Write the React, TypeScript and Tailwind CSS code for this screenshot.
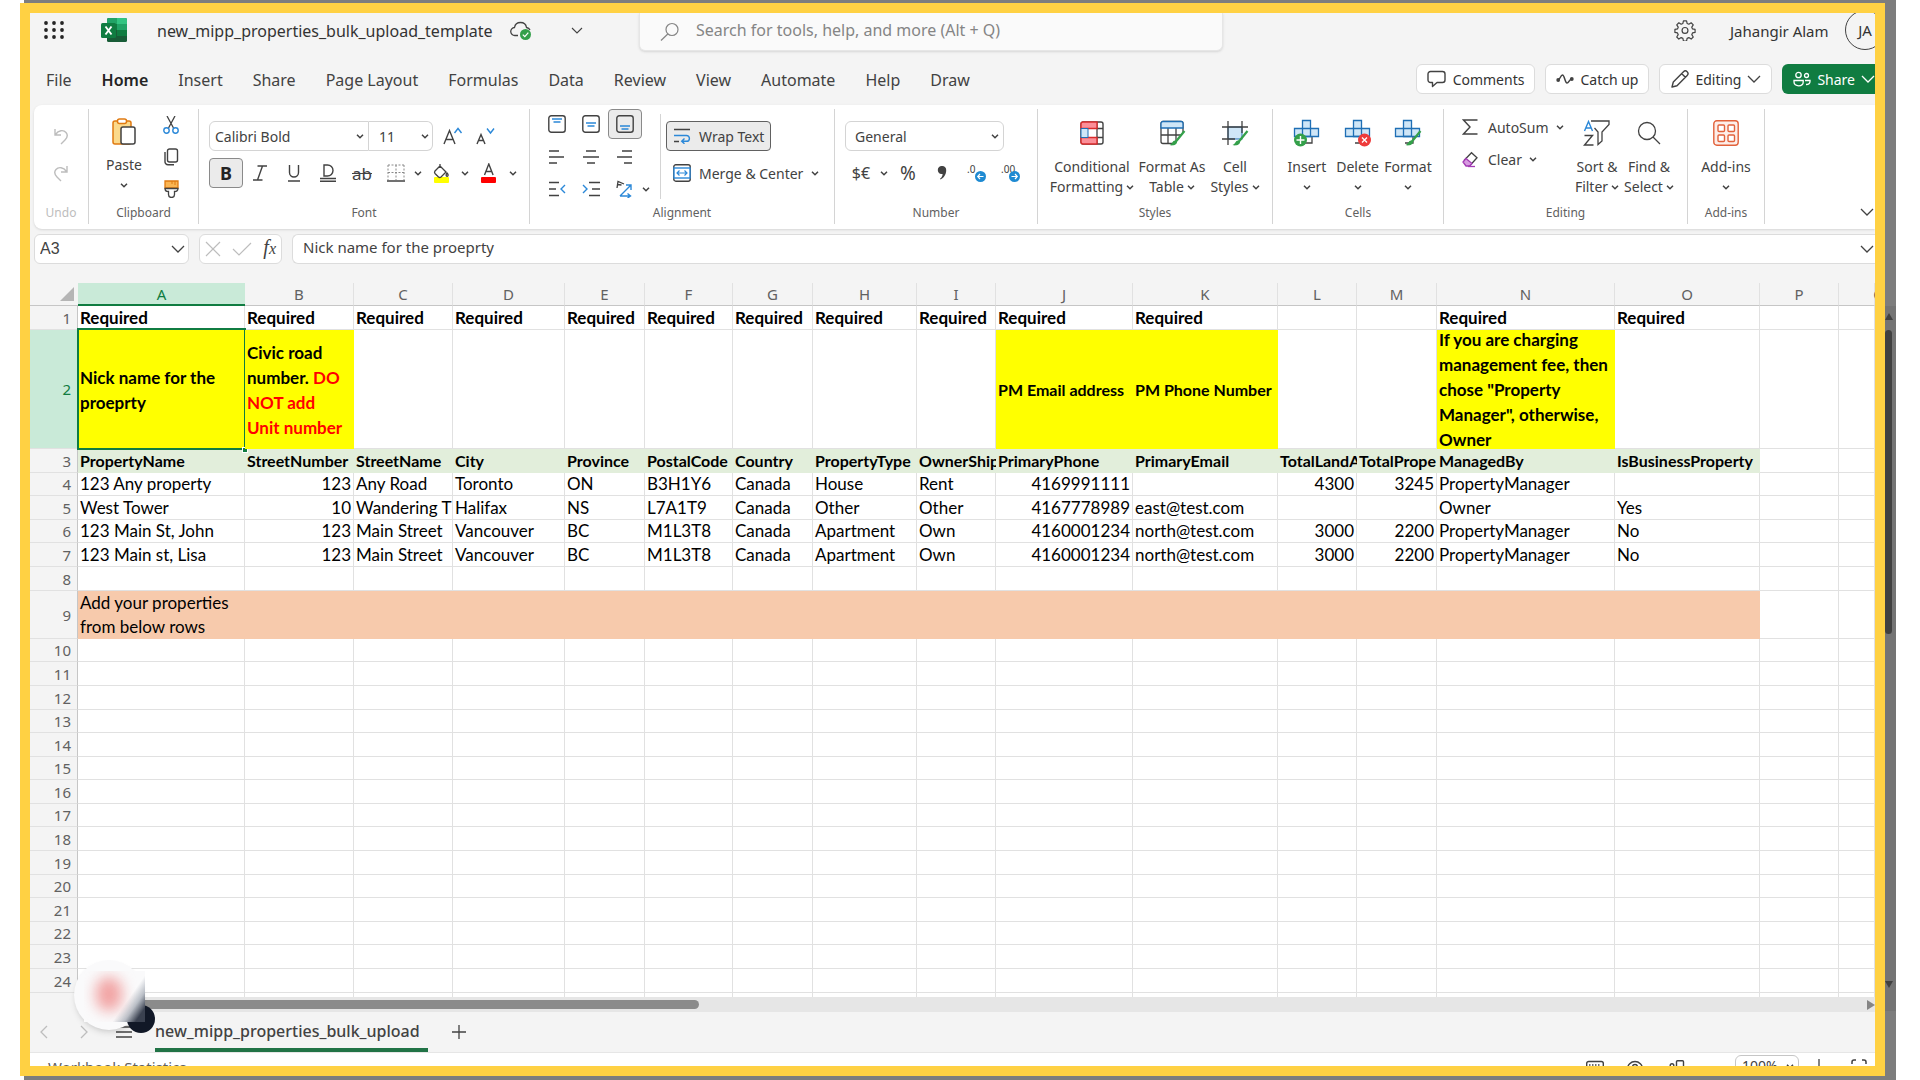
import React from "react";

type Kids = { children?: React.ReactNode };

const INK = "#424242";
const BLUE = "#2b88d8";

function Svg({ w, h, vb, children, sw = 1 }: Kids & { w: number; h: number; vb?: string; sw?: number }) {
  return (
    <svg width={w} height={h} viewBox={vb ?? `0 0 ${w} ${h}`} fill="none" stroke={INK} strokeWidth={sw} className="shrink-0" aria-hidden="true">
      {children}
    </svg>
  );
}

function Chev({ big = false, color = INK }: { big?: boolean; color?: string }) {
  return big ? (
    <svg width="14" height="8" viewBox="0 0 14 8" fill="none" stroke={color} strokeWidth="1.3" className="shrink-0" aria-hidden="true">
      <path d="M1 1l6 6 6-6" />
    </svg>
  ) : (
    <svg width="8" height="5" viewBox="0 0 8 5" fill="none" stroke={color} strokeWidth="1.5" className="shrink-0" aria-hidden="true">
      <path d="M1 .8l3 3 3-3" />
    </svg>
  );
}

/* ---------- title bar ---------- */

function TitleBar() {
  return (
    <header className="flex h-[38px] shrink-0 items-start">
      <button aria-label="App launcher" className="ml-[14px] mt-2 shrink-0">
        <Svg w={20} h={18}>
          {[2, 9, 16].map((y) => [2, 10, 18].map((x) => <circle key={`${x}-${y}`} cx={x} cy={y} r="1.9" fill="#242424" stroke="none" />))}
        </Svg>
      </button>
      <div className="ml-[37px] mt-[5px] shrink-0">
        <Svg w={26} h={24}>
          <g stroke="none">
            <rect x="6" y="0" width="20" height="24" rx="1.5" fill="#185c37" />
            <path d="M7.500 0H16v6H6V1.500A1.500 1.500 0 0 1 7.500 0z" fill="#21a366" />
            <path d="M16 0h8.500A1.500 1.500 0 0 1 26 1.500V6H16z" fill="#33c481" />
            <rect x="6" y="6" width="10" height="6" fill="#107c41" />
            <rect x="16" y="6" width="10" height="6" fill="#21a366" />
            <rect x="16" y="12" width="10" height="6" fill="#107c41" />
            <rect x="0" y="5" width="15" height="15" rx="1.500" fill="#107c41" />
          </g>
          <path d="M4.500 8.500l6 8M10.500 8.500l-6 8" stroke="#fff" strokeWidth="1.9" />
        </Svg>
      </div>
      <span className="ml-[30px] mt-[6px] w-[341px] shrink-0 whitespace-nowrap text-base leading-6">new_mipp_properties_bulk_upload_template</span>
      <span className="ml-[12px] mt-[8px] shrink-0">
        <Svg w={22} h={20}>
          <path d="M8 14.500H5a4 4 0 0 1-.5-8C5 3.500 7.500 1.500 10.500 1.500s5.500 2 6 5c1.800.2 3 1.300 3.500 2.500" strokeWidth="1.3" />
          <circle cx="15.500" cy="13.500" r="5.500" fill="#34a04a" stroke="none" />
          <path d="M12.800 13.700l2 2 3.500-4" stroke="#fff" strokeWidth="1.2" />
        </Svg>
      </span>
      <button aria-label="File menu" className="ml-[39px] mt-[14px] shrink-0">
        <Svg w={12} h={7}><path d="M1 1l5 5 5-5" strokeWidth="1.1" /></Svg>
      </button>
      <label className="ml-[56px] flex h-[38px] w-[584px] shrink-0 items-center gap-4 rounded-b-md border border-t-0 border-[#e6e6e6] bg-[#fafafa] px-5 shadow-sm">
        <Svg w={20} h={20}>
          <circle cx="12" cy="7.500" r="6" stroke="#858585" strokeWidth="1.2" />
          <path d="M7.800 12L1 18.500" stroke="#858585" strokeWidth="1.2" />
        </Svg>
        <input aria-label="Search" placeholder="Search for tools, help, and more (Alt + Q)" className="mb-1 w-full bg-transparent text-base placeholder-[#858585] outline-none" />
      </label>
      <span className="grow" />
      <button aria-label="Settings" className="mr-[34px] mt-[6px] shrink-0">
        <Svg w={22} h={22} vb="0 0 24 24">
          <path d="M10.300 2h3.400l.6 2.900 1.900.8 2.500-1.600 2.300 2.300-1.600 2.500.8 1.900 2.800.6v3.200l-2.800.6-.8 1.900 1.600 2.500-2.300 2.300-2.500-1.600-1.900.8-.6 2.900h-3.400l-.6-2.900-1.900-.8-2.500 1.600L3 19.600l1.600-2.500-.8-1.900L1 14.600v-3.200l2.800-.6.8-1.900L3 6.400l2.300-2.300 2.500 1.600 1.900-.8z" strokeWidth="1.3" strokeLinejoin="round" />
          <circle cx="12" cy="12.500" r="3.200" strokeWidth="1.300" />
        </Svg>
      </button>
      <span className="mt-[6px] w-[101px] shrink-0 whitespace-nowrap text-[15px] leading-6">Jahangir Alam</span>
      <span className="-mr-[10px] -mt-[3px] ml-[14px] flex size-10 shrink-0 items-center justify-center rounded-full border border-[#424242] text-[15px]">JA</span>
    </header>
  );
}

/* ---------- menu ---------- */

const MENU = ["File", "Home", "Insert", "Share", "Page Layout", "Formulas", "Data", "Review", "View", "Automate", "Help", "Draw"];

function MenuBar() {
  const btn = "flex h-[30px] shrink-0 items-center whitespace-nowrap rounded-md border border-[#dcdcdc] bg-white text-[14px]";
  return (
    <nav className="flex h-[54px] shrink-0 items-center pl-4 pt-[2px]">
      <div className="flex gap-[30px] pt-[2px] text-base text-[#424242]">
        {MENU.map((m) => (
          <button key={m} className={m === "Home" ? "whitespace-nowrap font-semibold text-[#242424]" : "whitespace-nowrap"}>{m}</button>
        ))}
      </div>
      <span className="grow" />
      <div className="flex gap-[10px]">
        <button className={btn + " gap-[6px] px-[10px]"}>
          <Svg w={20} h={18}><path d="M3.500 1.500h12a2.500 2.500 0 0 1 2.500 2.500v6a2.500 2.500 0 0 1-2.500 2.500H10L5.500 16.500v-4h-2A2.500 2.500 0 0 1 1 10V4a2.500 2.500 0 0 1 2.500-2.500z" strokeWidth="1.4" strokeLinejoin="round" /></Svg>
          Comments
        </button>
        <button className={btn + " gap-[6px] px-[10px]"}>
          <Svg w={18} h={12}>
            <path d="M2 7c2 0 2.500-5 4.500-5S9 10 11 10s2-4 5-4" strokeWidth="1.500" />
            <circle cx="2.200" cy="7" r="1.900" fill={INK} stroke="none" /><circle cx="15.800" cy="6" r="1.900" fill={INK} stroke="none" />
          </Svg>
          Catch up
        </button>
        <button className={btn + " gap-[6px] px-[10px]"}>
          <Svg w={19} h={19}><path d="M2 17l1.300-5L13.500 1.800a2.500 2.500 0 0 1 3.700 3.600L7 15.700zM11.800 3.800l3.500 3.500" strokeWidth="1.400" strokeLinejoin="round" /></Svg>
          Editing <Chev big />
        </button>
        <button className="-mr-[8px] flex h-[30px] shrink-0 items-center gap-[6px] whitespace-nowrap rounded-md bg-[#107c41] pl-[11px] pr-2 text-[14px] text-white">
          <Svg w={18} h={16}>
            <g stroke="#fff" strokeWidth="1.300"><circle cx="5.500" cy="4" r="2.700" /><circle cx="13.500" cy="4.500" r="2" /><path d="M1 9.500h9.200v1.500c0 2.500-2 3.800-4.600 3.800S1 13.500 1 11zM12 9.500h5v1c0 2-1.500 3-4 3" /></g>
          </Svg>
          Share <Chev big color="#fff" />
        </button>
      </div>
    </nav>
  );
}

/* ---------- ribbon ---------- */

function Group({ label, w, children, muted = false }: Kids & { label: string; w: string; muted?: boolean }) {
  return (
    <section className={"flex h-[115px] shrink-0 flex-col border-r border-[#d4d4d4] " + w}>
      <div className="h-[95px]">{children}</div>
      <div className={"text-center text-xs leading-[18px] " + (muted ? "text-[#bdbdbd]" : "text-[#616161]")}>{label}</div>
    </section>
  );
}

function Pad({ children, w, label, on = false }: Kids & { w: string; label: string; on?: boolean }) {
  return (
    <button aria-label={label} className={"flex h-[30px] shrink-0 items-center justify-center " + w + (on ? " rounded border border-[#8a8a8a] bg-[#ebebeb]" : "")}>
      {children}
    </button>
  );
}

const AlignV = ({ y }: { y: number }) => (
  <Svg w={18} h={18}>
    <rect x=".8" y=".8" width="16.400" height="16.400" rx="2.500" strokeWidth="1.400" />
    <path d={`M4 ${y}h10M5.500 ${y + 3}h7`} stroke={BLUE} strokeWidth="1.400" />
  </Svg>
);

const Lines = ({ d }: { d: string }) => <Svg w={18} h={16}><path d={d} strokeWidth="1.400" /></Svg>;

const CrossCells = ({ children }: Kids) => (
  <Svg w={28} h={28}>
    <path d="M2 16v-6h24M19 9v15h-8" strokeWidth="1.300" />
    <path d="M9.500 1.500h8v8h8v8h-8h-8h-8v-8h8z" fill="#cfe6f7" stroke="#1f6fb5" strokeWidth="1.300" />
    <path d="M9.500 9.500h8v8h-8zM9.500 9.500v8M17.500 9.500v8" stroke="#1f6fb5" strokeWidth="1.300" />
    {children}
  </Svg>
);

const Brush = () => (
  <g>
    <path d="M26.500 12l-9 11" stroke="#34a04a" strokeWidth="2.200" />
    <path d="M17.500 21.500c-3-.5-3 3.500-6 4.500 3 1 7.500 0 7.500-3z" fill="#34a04a" stroke="none" />
  </g>
);

function Tall({ icon, a, b, w }: { icon: React.ReactNode; a: string; b?: string; w: string }) {
  return (
    <button className={"flex shrink-0 flex-col items-center whitespace-nowrap text-[14px] leading-5 text-[#424242] " + w}>
      <span className="mb-[10px] flex h-7 items-center">{icon}</span>
      <span>{a}</span>
      <span className="flex h-5 items-center gap-[3px]">{b}<Chev /></span>
    </button>
  );
}

function DecIcon({ text, left }: { text: string; left: boolean }) {
  return (
    <span className="relative block h-[18px] w-[18px] text-left text-[10px] leading-[11px] text-[#424242]">
      {text}
      <span className="absolute -right-px bottom-0">
        <Svg w={11} h={11}>
          <circle cx="5.500" cy="5.500" r="5.500" fill="#1e8ad2" stroke="none" />
          <path d={left ? "M8.500 5.500H3M5 3L2.700 5.500 5 8" : "M2.500 5.500H8M6 3l2.300 2.500L6 8"} stroke="#fff" strokeWidth="1.200" />
        </Svg>
      </span>
    </span>
  );
}

function Ribbon() {
  return (
    <div className="ml-1 flex h-[124px] shrink-0 rounded-l-lg bg-white pt-1 text-[#424242] shadow">
      <Group label="Undo" w="w-[55px]" muted>
        <div className="flex flex-col items-center pt-3">
          <Pad label="Undo" w="w-8">
            <Svg w={16} h={18}><path d="M2 2v6h6M2.500 7.500c3-4.500 8-5 10.500-2s1.500 5-1 7.500l-4 4" stroke="#bdbdbd" strokeWidth="1.400" /></Svg>
          </Pad>
          <span className="h-[7px]" />
          <Pad label="Redo" w="w-8">
            <Svg w={16} h={18}><path d="M14 2v6H8M13.500 7.500C10.500 3 5.500 2.500 3 5.500s-1.500 5 1 7.500l4 4" stroke="#bdbdbd" strokeWidth="1.400" /></Svg>
          </Pad>
        </div>
      </Group>

      <Group label="Clipboard" w="w-[110px]">
        <div className="flex">
          <button className="ml-2 mt-[9px] flex w-[54px] flex-col items-center text-[14px] leading-5">
            <Svg w={26} h={27}>
              <rect x="2" y="3" width="18" height="23" rx="2" fill="#fbd98b" stroke="#e07a10" strokeWidth="1.500" />
              <rect x="6.500" y="1" width="9" height="4.500" rx="2" fill="#fff" stroke="#e07a10" strokeWidth="1.500" />
              <rect x="10" y="9" width="14" height="17" rx="2" fill="#fff" strokeWidth="1.500" />
            </Svg>
            <span className="mt-[10px]">Paste</span>
            <span className="mt-2"><Chev /></span>
          </button>
          <div className="ml-[2px] flex flex-col">
            <button aria-label="Cut" className="flex h-8 w-9 items-center justify-center">
              <Svg w={18} h={18}>
                <path d="M5 0l6.500 12M13 0L6.500 12" strokeWidth="1.300" />
                <circle cx="4.500" cy="14.500" r="2.700" stroke={BLUE} strokeWidth="1.400" /><circle cx="13.500" cy="14.500" r="2.700" stroke={BLUE} strokeWidth="1.400" />
              </Svg>
            </button>
            <button aria-label="Copy" className="flex h-8 w-9 items-center justify-center">
              <Svg w={16} h={18}><rect x="4.500" y="1" width="10" height="13" rx="2" strokeWidth="1.400" /><path d="M2 4v9.500A3 3 0 0 0 5 16.800h6" strokeWidth="1.400" /></Svg>
            </button>
            <button aria-label="Format painter" className="flex h-8 w-9 items-center justify-center">
              <Svg w={15} h={18}>
                <path d="M1 1h13v7H1z" fill="#fbb552" stroke="#e07a10" strokeWidth="1.300" /><path d="M8 1v3M11 1v4" stroke="#e07a10" />
                <path d="M1 8.500h13c0 2.500-1 3-3.500 3v3a3 3 0 0 1-6 0v-3c-2.500 0-3.500-.5-3.500-3z" fill="#fff" strokeWidth="1.300" />
              </Svg>
            </button>
          </div>
        </div>
      </Group>

      <Group label="Font" w="w-[331px]">
        <div className="flex flex-col gap-[7px] pl-[10px] pt-3">
          <div className="flex h-[30px] items-center">
            <button aria-label="Font name" className="flex h-[30px] w-[160px] items-center justify-between rounded-l-md border border-[#d4d4d4] pl-[5px] pr-1 text-[14px]">Calibri Bold <Chev /></button>
            <button aria-label="Font size" className="flex h-[30px] w-[64px] items-center justify-between rounded-r-md border border-l-0 border-[#d4d4d4] pl-[10px] pr-[3px] text-[14px]">11 <Chev /></button>
            <button aria-label="Increase font size" className="ml-[10px]">
              <Svg w={20} h={18}><path d="M1 17L6.500 3.500 12 17M3 12.500h7" strokeWidth="1.400" /><path d="M11.500 6L15 1.500 18.500 6" stroke={BLUE} strokeWidth="1.400" /></Svg>
            </button>
            <button aria-label="Decrease font size" className="ml-[13px]">
              <Svg w={20} h={18}><path d="M1 17L5 7.500 9 17M2.500 13.500h5" strokeWidth="1.400" /><path d="M11 1.500l3.500 4.500L18 1.500" stroke={BLUE} strokeWidth="1.400" /></Svg>
            </button>
          </div>
          <div className="flex h-[30px] items-center">
            <Pad label="Bold" w="w-[34px]" on><span className="text-[18px] font-bold text-[#242424]">B</span></Pad>
            <Pad label="Italic" w="w-[34px]"><Svg w={14} h={16}><path d="M4.500 1H14M0 15h9.500M9.500 1l-5 14" strokeWidth="1.400" /></Svg></Pad>
            <Pad label="Underline" w="w-[34px]"><Svg w={14} h={17}><path d="M2.500 0v7.500a4.500 4.500 0 0 0 9 0V0M1 16h12" strokeWidth="1.400" /></Svg></Pad>
            <Pad label="Double underline" w="w-[34px]"><Svg w={16} h={18}><path d="M4 1v11h3.500a5.500 5.500 0 0 0 0-11zM0 14.500h16M0 17.300h16" strokeWidth="1.400" /></Svg></Pad>
            <Pad label="Strikethrough" w="w-[34px]"><span className="text-[17px] leading-none line-through">ab</span></Pad>
            <Pad label="Borders" w="w-[34px]"><Svg w={18} h={18}><path d="M1 1h16M1 8.500h16M1 1v15M9 1v15M17 1v15" stroke="#8a8a8a" strokeWidth="1" strokeDasharray="2 1.500" /><path d="M0 17h18" strokeWidth="1.500" /></Svg></Pad>
            <Pad label="Border options" w="w-[10px]"><Chev /></Pad>
            <Pad label="Fill color" w="w-[38px]">
              <Svg w={18} h={20}>
                <rect x="1" y="14" width="15" height="6" rx="1" fill="#ffff00" stroke="none" />
                <path d="M7 3l6 6-5 5a2 2 0 0 1-2.500 0L2 10.500a2 2 0 0 1 0-2.500zM7 5V1" strokeWidth="1.300" /><path d="M14 10c1.500 1.500 1.500 3 .2 3.300-1.400-.3-1.400-1.800-.2-3.300z" strokeWidth="1.300" />
              </Svg>
            </Pad>
            <Pad label="Fill options" w="w-2"><Chev /></Pad>
            <Pad label="Font color" w="w-[40px]">
              <Svg w={16} h={20}><rect x="0" y="14" width="15" height="6" rx="1" fill="#ff0000" stroke="none" /><path d="M3.500 12L7.800 1l4.300 11M5 8.500h5.600" strokeWidth="1.400" /></Svg>
            </Pad>
            <Pad label="Font color options" w="w-2"><Chev /></Pad>
          </div>
        </div>
      </Group>

      <Group label="Alignment" w="w-[305px]">
        <div className="flex">
          <div className="ml-[10px] grid grid-cols-3">
            <span className="flex h-8"><Pad label="Top align" w="w-[34px]"><AlignV y={4} /></Pad></span>
            <span className="flex h-8"><Pad label="Middle align" w="w-[34px]"><AlignV y={8} /></Pad></span>
            <span className="flex h-8"><Pad label="Bottom align" w="w-[34px]" on><AlignV y={11} /></Pad></span>
            <span className="flex h-8 items-center"><Pad label="Align left" w="w-[34px]"><Lines d="M1 2h10M1 8h15M1 14h8" /></Pad></span>
            <span className="flex h-8 items-center"><Pad label="Center" w="w-[34px]"><Lines d="M4 2h10M1 8h16M5 14h8" /></Pad></span>
            <span className="flex h-8 items-center"><Pad label="Align right" w="w-[34px]"><Lines d="M6 2h10M1 8h15M8 14h8" /></Pad></span>
            <span className="flex h-8 items-center"><Pad label="Decrease indent" w="w-[34px]"><Svg w={18} h={16}><path d="M1 1.500h10M1 8h7M1 14.500h10" strokeWidth="1.400" /><path d="M17 4l-4 4 4 4" stroke={BLUE} strokeWidth="1.400" /></Svg></Pad></span>
            <span className="flex h-8 items-center"><Pad label="Increase indent" w="w-[34px]"><Svg w={18} h={16}><path d="M7 1.500h11M10 8h8M7 14.500h11" strokeWidth="1.400" /><path d="M1 4l4 4-4 4" stroke={BLUE} strokeWidth="1.400" /></Svg></Pad></span>
            <span className="flex h-8 items-center"><Pad label="Orientation" w="w-[34px]"><Svg w={18} h={18}><path d="M1 8l1-6.500L8 4M1.500 4.500l4 .5" strokeWidth="1.300" /><path d="M4 16L15 5M10 5h5v5M4 16h10M11.500 13.500l3 2.500-3 2" stroke={BLUE} strokeWidth="1.400" /></Svg></Pad></span>
          </div>
          <div className="-mr-2 mt-[78px] w-2"><Chev /></div>
          <div className="ml-[18px] mt-[5px] h-[85px] w-px bg-[#d4d4d4]" />
          <div className="ml-[5px] flex flex-col items-start gap-[7px] pt-3 text-[14px]">
            <button className="flex h-[30px] items-center gap-2 whitespace-nowrap rounded border border-[#616161] bg-[#ebebeb] px-[6px]">
              <Svg w={18} h={16}><path d="M1 1.500h16M1 13.500h5" strokeWidth="1.400" /><path d="M1 7.500h12.500a2.800 2.800 0 0 1 0 5.800H9M11.500 10.500L8.700 13.300l2.800 2.500" stroke={BLUE} strokeWidth="1.400" /></Svg>
              Wrap Text
            </button>
            <button className="flex h-[30px] items-center gap-2 whitespace-nowrap px-[7px]">
              <Svg w={18} h={18}><rect x=".8" y=".8" width="16.400" height="16.400" rx="2" strokeWidth="1.400" /><rect x="1" y="4" width="16" height="10" fill="#fff" stroke={BLUE} strokeWidth="1.400" /><path d="M4 9h10M6.500 6.500L4 9l2.500 2.500M11.500 6.500L14 9l-2.500 2.500" stroke={BLUE} strokeWidth="1.200" /></Svg>
              Merge &amp; Center <Chev />
            </button>
          </div>
        </div>
      </Group>

      <Group label="Number" w="w-[203px]">
        <div className="flex flex-col gap-[7px] pl-[10px] pt-3 text-[14px]">
          <button aria-label="Number format" className="flex h-[30px] w-[159px] items-center justify-between rounded-md border border-[#d4d4d4] pl-[9px] pr-1">General <Chev /></button>
          <div className="flex h-[30px] items-center">
            <Pad label="Accounting format" w="w-[32px]"><span className="text-base">$€</span></Pad>
            <Pad label="Currency options" w="w-[14px]"><Chev /></Pad>
            <Pad label="Percent style" w="w-[34px]"><span className="text-[19px]">%</span></Pad>
            <Pad label="Comma style" w="w-[34px]"><Svg w={10} h={14}><path d="M5 0a4 4 0 0 1 4.200 4c0 4.500-2.200 7.800-5.700 9.500l-.5-.8c1.800-1.400 2.600-3 2.600-4.800C2.500 8.500.8 6.500.8 4A4 4 0 0 1 5 0z" fill={INK} stroke="none" /></Svg></Pad>
            <Pad label="Decrease decimal" w="w-[34px]"><DecIcon text=".0" left /></Pad>
            <Pad label="Increase decimal" w="w-[34px]"><DecIcon text=".00" left={false} /></Pad>
          </div>
        </div>
      </Group>

      <Group label="Styles" w="w-[235px]">
        <div className="flex gap-1 pl-3 pt-[10px]">
          <Tall w="w-[84px]" a="Conditional" b="Formatting" icon={
            <Svg w={24} h={24}>
              <rect x="1" y="1" width="22" height="22" rx="2" strokeWidth="1.400" /><path d="M17 1v22M17 7.500h6M17 16.500h6" strokeWidth="1.300" />
              <path d="M17 1H3a2 2 0 0 0-2 2v4.500h16zM17 16.500H1V21a2 2 0 0 0 2 2h14z" fill="#fb8f98" stroke="#d92c2c" strokeWidth="1.400" />
              <path d="M1 7.500h7v9H1z" fill="#cfe6f7" stroke="#1f6fb5" />
            </Svg>} />
          <Tall w="w-[68px]" a="Format As" b="Table" icon={
            <Svg w={28} h={28}>
              <rect x="3" y="2.500" width="22" height="22" rx="2" strokeWidth="1.300" /><path d="M3 16h22M10 9v15.500M18 9v15.500" strokeWidth="1.300" />
              <path d="M16 24L25 13h3v13H14z" fill="#fff" stroke="none" />
              <path d="M5 2.500h18a2 2 0 0 1 2 2V9H3V4.500a2 2 0 0 1 2-2z" fill="#cfe6f7" stroke="#1f6fb5" strokeWidth="1.300" /><Brush />
            </Svg>} />
          <Tall w="w-[50px]" a="Cell" b="Styles" icon={
            <Svg w={28} h={28}>
              <rect x="7" y="8" width="14" height="12" fill="#cfe6f7" stroke="#1f6fb5" /><path d="M7 2v24M21 2v12M1 8h26M1 20h13" strokeWidth="1.300" /><Brush />
            </Svg>} />
        </div>
      </Group>

      <Group label="Cells" w="w-[171px]">
        <div className="flex pl-[9px] pt-[10px]">
          <Tall w="w-[50px]" a="Insert" icon={<CrossCells><circle cx="7.500" cy="21" r="6.500" fill="#34a04a" stroke="none" /><path d="M7.500 17v8M3.500 21h8" stroke="#fff" strokeWidth="1.400" /></CrossCells>} />
          <Tall w="w-[51px]" a="Delete" icon={<CrossCells><circle cx="20.500" cy="21" r="6.500" fill="#ee3b3b" stroke="none" /><path d="M18 18.500l5 5M23 18.500l-5 5" stroke="#fff" strokeWidth="1.300" /></CrossCells>} />
          <Tall w="w-[50px]" a="Format" icon={<CrossCells><Brush /></CrossCells>} />
        </div>
      </Group>

      <Group label="Editing" w="w-[244px]">
        <div className="flex">
          <div className="flex w-[127px] flex-col items-start pl-[18px] pt-[2px] text-[14px]">
            <button className="flex h-8 items-center gap-[10px] whitespace-nowrap">
              <Svg w={16} h={16}><path d="M15.500 1H1.500l6.500 7-6.500 7h14" strokeWidth="1.400" /></Svg>
              <span className="flex items-center gap-[7px]">AutoSum <Chev /></span>
            </button>
            <button className="flex h-8 items-center gap-[10px] whitespace-nowrap">
              <Svg w={16} h={17}><path d="M2 9.500l7.500-7.800 5.500 5L8 14.500" strokeWidth="1.300" /><path d="M4 7.500l6 5-2.500 2.500H4L1 11z" fill="#d79be0" stroke="#a33bb5" strokeWidth="1.300" /><path d="M6 15.500h7" stroke="#a33bb5" strokeWidth="1.300" /></Svg>
              <span className="flex items-center gap-[7px]">Clear <Chev /></span>
            </button>
          </div>
          <div className="flex pt-[10px]">
            <Tall w="w-[52px]" a="Sort &" b="Filter" icon={
              <Svg w={28} h={28}>
                <path d="M8 2h18v3.500l-7 7.500v9l-4 3.500V13l-3.500-4" strokeWidth="1.300" /><path d="M1.500 12L5.500 2.500 9.500 12M3 9h5" stroke={BLUE} strokeWidth="1.400" />
                <path d="M1.500 16.500h8l-8 9.500h9" strokeWidth="1.400" />
              </Svg>} />
            <Tall w="w-[52px]" a="Find &" b="Select" icon={<Svg w={24} h={24}><circle cx="10" cy="10" r="8.500" strokeWidth="1.300" /><path d="M16 16l7 7" strokeWidth="1.300" /></Svg>} />
          </div>
        </div>
      </Group>

      <Group label="Add-ins" w="w-[77px]">
        <div className="flex justify-center pt-[10px]">
          <Tall w="w-[60px]" a="Add-ins" icon={
            <Svg w={26} h={26}>
              <g stroke="#e2623c" strokeWidth="1.400"><rect x=".8" y=".8" width="24.400" height="24.400" rx="3" fill="#fdeee9" />
                {[5, 15].map((y) => [5, 15].map((x) => <rect key={`${x}-${y}`} x={x} y={y} width="6.500" height="6.500" rx="1" fill="#fff" />))}</g>
            </Svg>} />
        </div>
      </Group>
      <span className="grow" />
      <button aria-label="Collapse ribbon" className="mb-[13px] mr-[1px] self-end"><Chev big /></button>
    </div>
  );
}

/* ---------- formula bar ---------- */

function FormulaBar() {
  const box = "flex h-[30px] items-center border border-[#dcdcdc] bg-white text-[#424242]";
  return (
    <div className="flex h-[54px] shrink-0 items-start pl-1 pt-[5px]">
      <label className={box + " w-[155px] rounded-md pl-[5px] pr-[3px]"}>
        <input aria-label="Name box" defaultValue="A3" className="w-full bg-transparent font-['Liberation_Sans'] text-base outline-none" />
        <Chev big />
      </label>
      <div className={box + " ml-[10px] w-[83px] justify-between rounded-md px-[5px]"}>
        <Svg w={16} h={16}><path d="M1 1l14 14M15 1L1 15" stroke="#bdbdbd" strokeWidth="1.200" /></Svg>
        <Svg w={20} h={14}><path d="M1 7l6 6L19 1" stroke="#bdbdbd" strokeWidth="1.200" /></Svg>
        <span className="font-['Liberation_Serif'] text-[20px] italic leading-none">f<span className="text-base">x</span></span>
      </div>
      <label className={box + " ml-[10px] grow rounded-l-md border-r-0 pl-[10px] pr-[1px]"}>
        <input aria-label="Formula" defaultValue="Nick name for the proeprty" className="mb-1 w-full bg-transparent text-[15px] outline-none" />
        <Chev big />
      </label>
    </div>
  );
}

/* ---------- sheet ---------- */

const COLS: [string, string][] = [
  ["A", "w-[167px]"], ["B", "w-[109px]"], ["C", "w-[99px]"], ["D", "w-[112px]"], ["E", "w-[80px]"], ["F", "w-[88px]"],
  ["G", "w-[80px]"], ["H", "w-[104px]"], ["I", "w-[79px]"], ["J", "w-[137px]"], ["K", "w-[145px]"], ["L", "w-[79px]"],
  ["M", "w-[80px]"], ["N", "w-[178px]"], ["O", "w-[145px]"], ["P", "w-[79px]"], ["Q", ""],
];

const R = "Required";
const DATA: Record<number, string[]> = {
  1: [R, R, R, R, R, R, R, R, R, R, R, "", "", R, R],
  3: ["PropertyName", "StreetNumber", "StreetName", "City", "Province", "PostalCode", "Country", "PropertyType", "OwnerShip", "PrimaryPhone", "PrimaryEmail", "TotalLandA", "TotalPrope", "ManagedBy", "IsBusinessProperty"],
  4: ["123 Any property", "123", "Any Road", "Toronto", "ON", "B3H1Y6", "Canada", "House", "Rent", "4169991111", "", "4300", "3245", "PropertyManager", ""],
  5: ["West Tower", "10", "Wandering T", "Halifax", "NS", "L7A1T9", "Canada", "Other", "Other", "4167778989", "east@test.com", "", "", "Owner", "Yes"],
  6: ["123 Main St, John", "123", "Main Street", "Vancouver", "BC", "M1L3T8", "Canada", "Apartment", "Own", "4160001234", "north@test.com", "3000", "2200", "PropertyManager", "No"],
  7: ["123 Main st, Lisa", "123", "Main Street", "Vancouver", "BC", "M1L3T8", "Canada", "Apartment", "Own", "4160001234", "north@test.com", "3000", "2200", "PropertyManager", "No"],
};

const NOTES: Record<string, React.ReactNode> = {
  A: "Nick name for the proeprty",
  B: <>Civic road number. <span className="text-[#ff0000]">DO NOT add<br />Unit number</span></>,
  J: <span className="whitespace-nowrap text-base">PM Email address</span>,
  K: <span className="whitespace-nowrap text-base">PM Phone Number</span>,
  N: 'If you are charging management fee, then chose "Property Manager", otherwise, Owner',
};

const SHORT_ROWS = [4, 6, 10, 13, 15, 17, 20, 22];

function Cell({ row, i }: { row: number; i: number }) {
  const col = COLS[i][0];
  const inData = i < 15;
  if (row === 2) {
    const note = NOTES[col];
    return (
      <td className={"relative p-0 " + (note ? "bg-[#ffff00]" : "border-b border-r border-[#e1e1e1]")}>
        <div className="flex h-[118px] items-center px-[2px] font-bold leading-[25px]"><div>{note}</div></div>
        {col === "A" && (
          <div className="absolute -bottom-px -left-px -right-px -top-[2px] border-2 border-[#107c41]">
            <span className="absolute -bottom-[5px] -right-[4px] size-[6px] border border-white bg-[#107c41]" />
          </div>
        )}
      </td>
    );
  }
  if (row === 9 && inData) {
    return (
      <td className="bg-[#f7caac] p-0 px-[2px]">
        {i === 0 && <div className="leading-6">Add your properties from below rows</div>}
      </td>
    );
  }
  const num = row > 3 && ["B", "J", "L", "M"].includes(col);
  const clip = row === 3 && ["I", "L", "M"].includes(col);
  return (
    <td className={
      "whitespace-nowrap p-0 pl-[2px] leading-[22px] " +
      (clip ? "overflow-hidden " : "") +
      (row === 3 && inData ? "bg-[#e2eedb] text-base " : "border-b border-r border-[#e1e1e1] ") +
      (row < 4 ? "font-bold " : "") + (num ? "pr-[2px] text-right" : "")
    }>{DATA[row]?.[i]}</td>
  );
}

function Sheet() {
  return (
    <div className="min-h-0 grow overflow-hidden bg-white">
      <table className="w-full table-fixed border-separate border-spacing-0 font-['Lato'] text-[17px] text-black">
        <colgroup>
          <col className="w-12" />
          {COLS.map(([c, w]) => <col key={c} className={w} />)}
        </colgroup>
        <thead className="font-['Noto_Sans'] text-[15px] text-[#616161]">
          <tr className="h-[23px] bg-[#f4f4f4]">
            <th className="border-b border-[#c6c6c6] p-0">
              <span className="flex justify-end pr-1"><Svg w={14} h={14}><path d="M14 0v14H0z" fill="#b5b5b5" stroke="none" /></Svg></span>
            </th>
            {COLS.map(([c]) => (
              <th key={c} scope="col" className={"p-0 font-normal leading-5 " + (c === "A" ? "border-b-2 border-[#107c41] bg-[#c9ead8] text-[#107c41]" : "border-b border-r border-b-[#c6c6c6] border-r-[#e1e1e1]")}>
                {c === "Q" ? <div className="w-20 text-center">Q</div> : c}
              </th>
            ))}
          </tr>
        </thead>
        <tbody>
          {Array.from({ length: 25 }, (_, k) => k + 1).map((row) => (
            <tr key={row} className={row === 2 ? "h-[119px]" : row === 9 ? "h-12" : SHORT_ROWS.includes(row) ? "h-[23px]" : "h-6"}>
              <th scope="row" className={"border-b border-r border-b-[#e1e1e1] border-r-[#c6c6c6] p-0 pr-[6px] text-right font-['Noto_Sans'] text-[15px] font-normal leading-[22px] " + (row === 2 ? "bg-[#c9ead8] text-[#107c41]" : "bg-[#f4f4f4] text-[#616161]")}>{row}</th>
              {COLS.map(([c], i) => <Cell key={c} row={row} i={i} />)}
            </tr>
          ))}
        </tbody>
      </table>
    </div>
  );
}

/* ---------- bottom ---------- */

function Bottom() {
  return (
    <div className="shrink-0">
      <div className="flex h-[15px] items-center bg-[#e6e6e6]">
        <div className="h-full w-12 shrink-0 bg-[#f4f4f4]" />
        <div className="ml-12 h-[9px] w-[573px] rounded-full bg-[#8b8b8b]" />
        <span className="grow" />
        <Svg w={8} h={10}><path d="M0 0l8 5-8 5z" fill="#858585" stroke="none" /></Svg>
      </div>
      <div className="flex h-[41px] items-center border-b border-[#e6e6e6]">
        <button aria-label="Previous sheet" className="ml-[10px]"><Svg w={8} h={14}><path d="M7 1L1 7l6 6" stroke="#bdbdbd" strokeWidth="1.300" /></Svg></button>
        <button aria-label="Next sheet" className="ml-[32px]"><Svg w={8} h={14}><path d="M1 1l6 6-6 6" stroke="#bdbdbd" strokeWidth="1.300" /></Svg></button>
        <button aria-label="All sheets" className="ml-[28px]"><Svg w={16} h={12}><path d="M0 1h16M0 6h16M0 11h16" strokeWidth="1.500" /></Svg></button>
        <button className="ml-[23px] h-full w-[273px] whitespace-nowrap border-b-4 border-[#217346] pt-[2px] text-left text-base font-medium text-[#424242]">new_mipp_properties_bulk_upload</button>
        <button aria-label="Add sheet" className="ml-6"><Svg w={14} h={14}><path d="M7 0v14M0 7h14" strokeWidth="1.300" /></Svg></button>
      </div>
      <footer className="h-[13px] overflow-hidden bg-white">
        <div className="flex items-start">
          <span className="ml-[18px] mt-[4px] whitespace-nowrap text-[15px] leading-5 text-[#616161]">Workbook Statistics</span>
          <span className="grow" />
          <div className="flex shrink-0 items-start pt-[7px]">
            <Svg w={18} h={14}><rect x=".7" y="1.500" width="16.600" height="12" rx="2" strokeWidth="1.400" /><path d="M3 5h12" strokeWidth="1.400" strokeDasharray="1.500 1.500" /></Svg>
            <span className="ml-[22px]"><Svg w={18} h={18}><circle cx="9" cy="9" r="7.500" strokeWidth="1.400" /><circle cx="9" cy="7" r="2.500" strokeWidth="1.400" /></Svg></span>
            <span className="ml-[24px]"><Svg w={18} h={18}><rect x="8.500" y=".8" width="7" height="6" rx="1" strokeWidth="1.400" /><circle cx="4" cy="5.500" r="1.800" strokeWidth="1.400" /></Svg></span>
          </div>
          <button aria-label="Zoom" className="ml-[49px] mt-[2px] flex h-6 w-[64px] shrink-0 items-start justify-between rounded-md border border-[#c6c6c6] pl-[6px] pr-1 text-[14px] leading-5 text-[#424242]">100% <span className="mt-2 flex"><Chev /></span></button>
          <span className="ml-[13px] mt-[6px]"><Svg w={14} h={14}><path d="M7 0v14" strokeWidth="1.300" /></Svg></span>
          <span className="ml-[25px] mr-2 mt-[6px]"><Svg w={16} h={16}><path d="M1 5V3a2 2 0 0 1 2-2h2M11 1h2a2 2 0 0 1 2 2v2" strokeWidth="1.500" /></Svg></span>
        </div>
      </footer>
      <div className="absolute bottom-[36px] left-[44px] size-[70px] rounded-full bg-[#fafafb] shadow-md">
        <div className="absolute bottom-[-3px] right-[-11px] size-7 rounded-full bg-[#111827]" />
        <div className="absolute left-[10px] top-[11px] h-[51px] w-[61px] overflow-hidden bg-[linear-gradient(125deg,#fafafb_66%,#b9bec6_78%,#3a4150_90%)]">
          <div className="absolute left-[12px] top-[6px] h-[34px] w-[26px] rounded-full bg-[#f1a3a3] blur-[7px]" />
        </div>
      </div>
    </div>
  );
}

export default function App() {
  return (
    <div className="h-screen min-h-[600px] overflow-hidden bg-white px-6 font-['Noto_Sans',sans-serif] text-[#333333]">
      <div className="flex h-full bg-[#7d7d7d] pb-1 pt-[3px]">
        <main className="relative -ml-1 flex min-w-0 grow flex-col overflow-hidden border-10 border-[#ffd143] bg-[#f4f4f4]">
          <TitleBar />
          <MenuBar />
          <Ribbon />
          <FormulaBar />
          <Sheet />
          <Bottom />
        </main>
        <div className="flex w-[11px] shrink-0 flex-col pb-[65px] pt-[303px]">
          <div className="flex grow flex-col items-start bg-[#747474] pb-[22px] pt-[7px]">
            <Svg w={8} h={8}><path d="M0 7L4 0l4 7z" fill="#404040" stroke="none" /></Svg>
            <div className="mt-[9px] h-[304px] w-[7px] rounded-full bg-[#404040]" />
            <span className="grow" />
            <Svg w={8} h={8}><path d="M0 0l4 7 4-7z" fill="#404040" stroke="none" /></Svg>
          </div>
        </div>
      </div>
    </div>
  );
}
